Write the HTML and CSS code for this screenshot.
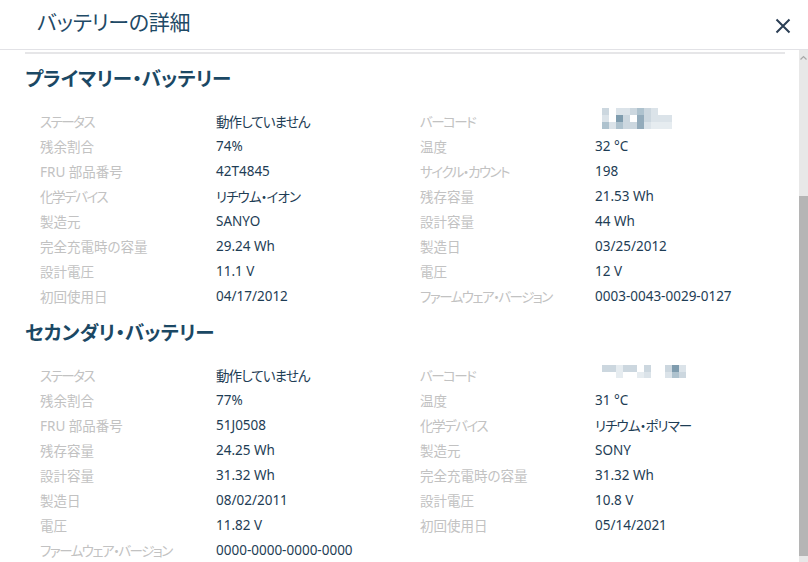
FILE: index.html
```html
<!DOCTYPE html>
<html lang="ja">
<head>
<meta charset="utf-8">
<title>バッテリーの詳細</title>
<link rel="stylesheet" href="styles.css">
</head>
<body>
<div class="dialog">
  <header class="header">
    <h1 class="title">バッテリーの詳細</h1>
    <button class="close" aria-label="閉じる">
      <svg width="16" height="16" viewBox="0 0 16 16"><path d="M1.5 1.5 L14.5 14.5 M14.5 1.5 L1.5 14.5" stroke="#2b3f55" stroke-width="2" fill="none"/></svg>
    </button>
  </header>
  <div class="body">
    <div class="content">
      <div class="rule"></div>
      <section class="section">
        <h2 class="heading">プライマリー・バッテリー</h2>
        <div class="grid">
          <div class="label k">ステータス</div><div class="value k">動作していません</div>
          <div class="label k">バーコード</div>
          <div class="value"><div class="barcode bc1">
            <i class="a"></i><i class="w"></i><i class="b"></i><i class="b"></i><i class="a"></i><i class="c"></i><i class="a"></i><i class="b"></i><i class="w"></i><i class="w"></i>
            <i class="b"></i><i class="w"></i><i class="e"></i><i class="a"></i><i class="w"></i><i class="d"></i><i class="a"></i><i class="b"></i><i class="b"></i><i class="b"></i>
            <i class="c"></i><i class="b"></i><i class="c"></i><i class="a"></i><i class="a"></i><i class="d"></i><i class="b"></i><i class="w2"></i><i class="w2"></i><i class="w2"></i>
          </div></div>
          <div class="label">残余割合</div><div class="value">74%</div>
          <div class="label">温度</div><div class="value">32 °C</div>
          <div class="label">FRU 部品番号</div><div class="value">42T4845</div>
          <div class="label k">サイクル・カウント</div><div class="value">198</div>
          <div class="label k">化学デバイス</div><div class="value k">リチウム・イオン</div>
          <div class="label">残存容量</div><div class="value">21.53 Wh</div>
          <div class="label">製造元</div><div class="value">SANYO</div>
          <div class="label">設計容量</div><div class="value">44 Wh</div>
          <div class="label">完全充電時の容量</div><div class="value">29.24 Wh</div>
          <div class="label">製造日</div><div class="value">03/25/2012</div>
          <div class="label">設計電圧</div><div class="value">11.1 V</div>
          <div class="label">電圧</div><div class="value">12 V</div>
          <div class="label">初回使用日</div><div class="value">04/17/2012</div>
          <div class="label k">ファームウェア・バージョン</div><div class="value">0003-0043-0029-0127</div>
        </div>
      </section>
      <section class="section">
        <h2 class="heading">セカンダリ・バッテリー</h2>
        <div class="grid">
          <div class="label k">ステータス</div><div class="value k">動作していません</div>
          <div class="label k">バーコード</div>
          <div class="value"><div class="barcode bc2">
            <i class="a"></i><i class="a"></i><i class="w2"></i><i class="a"></i><i class="a"></i><i class="w"></i><i class="a"></i><i class="w"></i><i class="w"></i><i class="a"></i><i class="e"></i><i class="b"></i>
            <i class="w"></i><i class="w"></i><i class="w2"></i><i class="w"></i><i class="w"></i><i class="w2"></i><i class="b"></i><i class="w"></i><i class="w"></i><i class="b"></i><i class="c"></i><i class="a"></i>
          </div></div>
          <div class="label">残余割合</div><div class="value">77%</div>
          <div class="label">温度</div><div class="value">31 °C</div>
          <div class="label">FRU 部品番号</div><div class="value">51J0508</div>
          <div class="label k">化学デバイス</div><div class="value k">リチウム・ポリマー</div>
          <div class="label">残存容量</div><div class="value">24.25 Wh</div>
          <div class="label">製造元</div><div class="value">SONY</div>
          <div class="label">設計容量</div><div class="value">31.32 Wh</div>
          <div class="label">完全充電時の容量</div><div class="value">31.32 Wh</div>
          <div class="label">製造日</div><div class="value">08/02/2011</div>
          <div class="label">設計電圧</div><div class="value">10.8 V</div>
          <div class="label">電圧</div><div class="value">11.82 V</div>
          <div class="label">初回使用日</div><div class="value">05/14/2021</div>
          <div class="label k">ファームウェア・バージョン</div><div class="value">0000-0000-0000-0000</div>
          <div class="label"></div><div class="value"></div>
        </div>
      </section>
    </div>
    <div class="scrollbar">
      <svg class="arrow" width="9" height="8" viewBox="0 0 9 8"><path d="M1.5 5.5 L4.5 2.5 L7.5 5.5" stroke="#a8a8a8" stroke-width="1.2" fill="none"/></svg>
      <div class="thumb"></div>
    </div>
  </div>
</div>
</body>
</html>
```
FILE: styles.css
```css
* { box-sizing: border-box; }
html, body {
  margin: 0;
  padding: 0;
  background: #ffffff;
}
body {
  font-family: "Noto Sans", "Noto Sans CJK JP", sans-serif;
  font-feature-settings: "palt";
}
.dialog {
  width: 808px;
  height: 562px;
  overflow: hidden;
  display: flex;
  flex-direction: column;
}
.header {
  height: 50px;
  flex: none;
  display: flex;
  align-items: center;
  justify-content: space-between;
  border-bottom: 1px solid #e2e2e6;
  padding: 0 17px 0 37px;
}
.title {
  margin: 0;
  font-size: 21px;
  font-weight: 400;
  color: #1f4a66;
  line-height: 30px;
  margin-top: -6px;
  letter-spacing: -0.3px;
}
.close {
  border: 0;
  background: none;
  padding: 0;
  width: 16px;
  height: 16px;
  display: flex;
  margin-top: 2px;
}
.body {
  flex: 1;
  display: flex;
  min-height: 0;
}
.content {
  flex: 1;
  padding: 2px 14px 0 25px;
  overflow: hidden;
}
.rule {
  height: 2px;
  background: #e6e6e8;
}
.section {
  margin-top: 10px;
}
.heading {
  margin: 0 0 14px 0;
  font-size: 19.5px;
  font-weight: 700;
  color: #1b4864;
  line-height: 30px;
}
.grid {
  display: grid;
  grid-template-columns: 175px 205px 174px 1fr;
  grid-auto-rows: 25px;
  padding-left: 15px;
  font-size: 13.5px;
  align-items: center;
}
.label {
  color: #c2c2c2;
  white-space: nowrap;
}
.label.k {
  letter-spacing: -1.5px;
}
.value {
  color: #1e3d55;
  white-space: nowrap;
  padding-left: 1px;
}
.value.k {
  letter-spacing: -0.9px;
}
.barcode {
  display: grid;
  margin-left: 7px;
}
.bc1 {
  grid-template-columns: repeat(10, 7px);
  grid-auto-rows: 7px;
  margin-top: -4px;
}
.bc2 {
  grid-template-columns: repeat(12, 7px);
  grid-auto-rows: 6.5px;
  margin-top: -6px;
}
.barcode i { display: block; }
.barcode .w { background: #ffffff; }
.barcode .w2 { background: #e6ecf0; }
.barcode .a { background: #ccd7df; }
.barcode .b { background: #dbe3e9; }
.barcode .c { background: #aec2ce; }
.barcode .d { background: #93abbb; }
.barcode .e { background: #7f9cae; }
.scrollbar {
  width: 9px;
  flex: none;
  background: #e8e8e8;
  display: flex;
  flex-direction: column;
  align-items: center;
}
.arrow {
  margin-top: 4px;
  flex: none;
}
.thumb {
  margin-top: 134px;
  width: 9px;
  height: 360px;
  background: #b5b5b5;
}
```
